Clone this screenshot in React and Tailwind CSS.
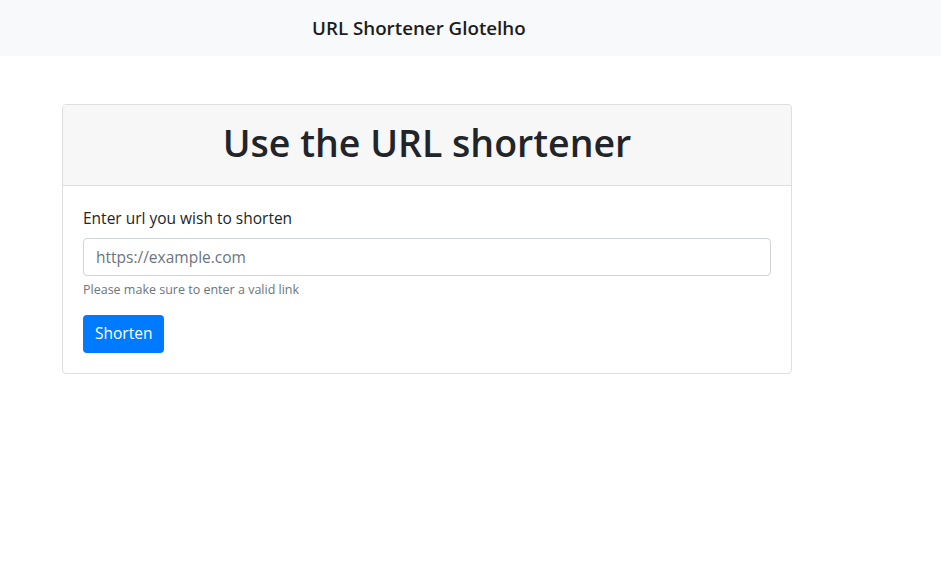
import React from "react";

const App = () => {
  return (
    <div className="min-h-[575px] bg-white font-['Open_Sans',sans-serif] text-[#212529]">
      <nav className="flex h-14 items-center bg-[#f8f9fa] pl-[312px]">
        <span className="text-[18.75px] font-semibold leading-[30px] text-[#1d1d1d]">
          URL Shortener Glotelho
        </span>
      </nav>
      <div className="pl-[62px] pt-12">
        <div className="w-[730px] rounded border border-[#dfdfdf] bg-white">
          <div className="rounded-t border-b border-[#dfdfdf] bg-[#f7f7f7] px-5 pb-[10px] pt-[14px]">
            <h1 className="mb-2 text-center text-[37.5px] font-semibold leading-[48px]">
              Use the URL shortener
            </h1>
          </div>
          <div className="p-5">
            <label className="mb-2 block text-[15.5px] leading-6">
              Enter url you wish to shorten
            </label>
            <input
              type="text"
              placeholder="https://example.com"
              className="block h-[38px] w-full rounded border border-[#ced4da] px-3 text-[15.5px] text-[#495057] placeholder:text-[#6c757d] outline-none"
            />
            <small className="mt-1 block text-[12.5px] leading-[19px] text-[#6c757d]">
              Please make sure to enter a valid link
            </small>
            <button className="mt-4 h-[38px] rounded bg-[#007bff] px-3 text-[15.5px] text-white">
              Shorten
            </button>
          </div>
        </div>
      </div>
    </div>
  );
};

export default App;
